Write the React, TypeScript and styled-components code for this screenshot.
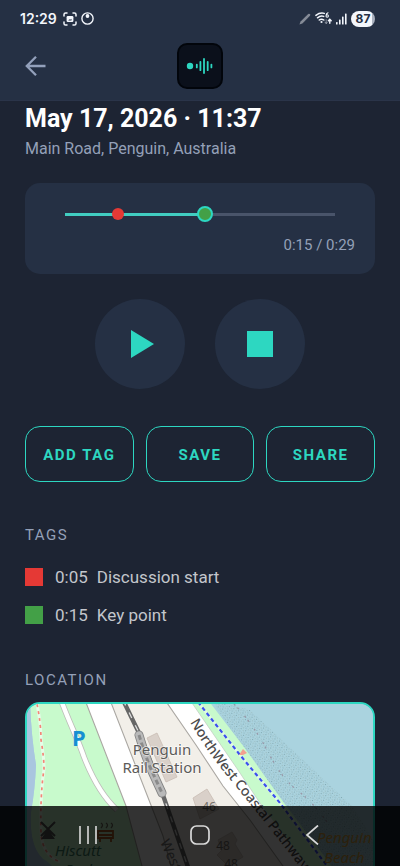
import React, { useState } from "react";
import styled, { createGlobalStyle } from "styled-components";

const c = {
  page: "#1d2433",
  panel: "#253044",
  teal: "#2dd7c1",
  muted: "#94a0b8",
  text: "#c3c6cc",
  rail: "#49546a",
};

const Global = createGlobalStyle`
  * { box-sizing: border-box; }
  html, body, #root { height: 100%; }
  body { margin: 0; background: ${c.page}; font-family: Roboto, sans-serif; }
  button { font: inherit; border: 0; padding: 0; background: none; cursor: pointer; }
`;

const Shell = styled.div`
  display: flex;
  flex-direction: column;
  height: 100vh;
  overflow: hidden;
`;

const TopArea = styled.header`
  flex: none;
  background: ${c.panel};
  border-bottom: 1px solid #2a3449;
`;

const StatusBar = styled.div`
  display: flex;
  align-items: center;
  justify-content: space-between;
  height: 37px;
  padding: 0 25px 0 20px;
  color: #f3f6fc;
`;

const StatusGroup = styled.div<{ $gap: number }>`
  display: flex;
  align-items: center;
  gap: ${(p) => p.$gap}px;
`;

const Clock = styled.time`
  margin-right: 2px;
  font: 600 14px/20px Inter, sans-serif;
`;

const Battery = styled.span`
  width: 24px;
  height: 16px;
  border-radius: 8px;
  background: linear-gradient(90deg, #f3f6fc 87%, #aab1bf 87%);
  color: ${c.panel};
  font: 700 12px/16px Inter, sans-serif;
  text-align: center;
`;

const AppBar = styled.div`
  display: grid;
  grid-template-columns: 1fr auto 1fr;
  align-items: center;
  height: 63px;
  padding: 0 24px 6px;
`;

const BackButton = styled.button`
  display: flex;
  width: 24px;
  height: 24px;
`;

const Logo = styled.div`
  display: flex;
  width: 46px;
  height: 46px;
  border: 2px solid #02050b;
  border-radius: 10px;
  background: #0b101b;
`;

const Content = styled.main`
  flex: 1;
  min-height: 0;
  padding: 2px 25px 0;
  overflow-y: auto;
  scrollbar-width: none;
`;

const Title = styled.h1`
  margin: 0;
  color: #fff;
  font-size: 25px;
  font-weight: 700;
  line-height: 32px;
`;

const Place = styled.p`
  margin: 2px 0 22px;
  color: ${c.muted};
  font-size: 16px;
  line-height: 24px;
`;

const PlayerCard = styled.section`
  display: flex;
  flex-direction: column;
  gap: 11px;
  padding: 20px;
  border-radius: 15px;
  background: ${c.panel};
`;

const Timeline = styled.div`
  position: relative;
  display: flex;
  align-items: center;
  height: 22px;
  margin: 0 20px;
`;

const Rail = styled.div`
  width: 100%;
  height: 3px;
  background: ${c.rail};
`;

const Played = styled.div`
  height: 3px;
  background: #41cdc1;
`;

const Seek = styled.input`
  position: absolute;
  left: -8px;
  width: calc(100% + 16px);
  height: 16px;
  margin: 0;
  appearance: none;
  background: transparent;
  &::-webkit-slider-thumb {
    appearance: none;
    width: 16px;
    height: 16px;
    border: 2px solid ${c.teal};
    border-radius: 50%;
    background: #43a047;
  }
`;

const Marker = styled.span`
  position: absolute;
  width: 12px;
  height: 12px;
  border-radius: 50%;
  background: #e53935;
  transform: translateX(-50%);
`;

const Elapsed = styled.div`
  color: ${c.muted};
  font-size: 15px;
  line-height: 18px;
  text-align: right;
`;

const Transport = styled.div`
  display: flex;
  justify-content: center;
  gap: 30px;
  margin: 25px 0 37px;
`;

const RoundButton = styled.button`
  display: grid;
  place-items: center;
  width: 90px;
  height: 90px;
  border-radius: 50%;
  && { background: ${c.panel}; }
`;

const Actions = styled.div`
  display: grid;
  grid-template-columns: repeat(3, 1fr);
  gap: 12px;
`;

const ActionButton = styled.button`
  && {
    height: 56px;
    padding-top: 2px;
    border: 1px solid ${c.teal};
    border-radius: 15px;
    color: ${c.teal};
    font-size: 15px;
    font-weight: 700;
    letter-spacing: 1.5px;
  }
`;

const SectionLabel = styled.h2<{ $after: number }>`
  margin: 43px 0 ${(p) => p.$after}px;
  color: ${c.muted};
  font-size: 15px;
  font-weight: 400;
  line-height: 20px;
  letter-spacing: 1.5px;
`;

const TagList = styled.ul`
  display: grid;
  gap: 14px;
  margin: 0;
  padding: 0;
  list-style: none;
`;

const Tag = styled.li`
  display: flex;
  align-items: center;
  color: ${c.text};
  font-size: 17px;
  line-height: 24px;
`;

const Swatch = styled.span<{ $color: string }>`
  width: 18px;
  height: 18px;
  margin-right: 12px;
  background: ${(p) => p.$color};
`;

const TagTime = styled.time`
  margin-right: 9px;
`;

const MapFrame = styled.div`
  height: 240px;
  border: 2px solid ${c.teal};
  border-radius: 15px;
  overflow: hidden;
  background: #aad3df;
  svg { display: block; width: 100%; height: 100%; }
`;

const SystemNav = styled.nav`
  position: fixed;
  inset: auto 0 0;
  display: grid;
  grid-template-columns: 88px 1fr 88px;
  height: 60px;
  padding: 0 44px 2px;
  background: rgba(0, 0, 0, 0.8);
`;

const NavButton = styled.button`
  display: grid;
  place-items: center;
`;

const MapDrawing = () => (
  <svg viewBox="27 704 346 236" preserveAspectRatio="xMidYMin slice" fontFamily="Noto Sans, sans-serif">
    <defs>
      <pattern id="sand" width="5" height="5" patternUnits="userSpaceOnUse" patternTransform="rotate(25)">
        <circle cx="1" cy="1" r=".5" fill="#6f969f" />
        <circle cx="3.4" cy="1.8" r=".5" fill="#8fa9a8" />
        <circle cx="1.6" cy="3.6" r=".5" fill="#6f969f" />
        <circle cx="4.2" cy="4.2" r=".5" fill="#8fa9a8" />
      </pattern>
      <path id="pathway" d="M190 722 C205 748 220 768 237 788 C259 815 281 842 310 880" />
    </defs>
    <rect x="20" y="700" width="360" height="250" fill="#aad3df" />
    <path d="M212 700 L250 710 L352 806 L374 840 V900 H340Z" fill="url(#sand)" />
    <path d="M234 704 Q254 725 268 752 T297 790 T330 826" fill="none" stroke="#9798a8" strokeWidth="1.3" strokeDasharray="2 3 2 9" />
    <path d="M30 700 Q31 735 36 765 Q35 790 31 812 Q29 845 42 858 Q65 870 100 950 H390 L325 857 L284 803 L244 747 L208 700Z" fill="#c8facc" />
    <path d="M26 700 H30 Q31 735 36 765 Q35 790 31 812 Q29 845 42 858 L80 950 H20Z" fill="#a9c6df" />
    <path d="M85 700 L126 806 L142 866 L160 950 H345 L318 880 L262 806 L238 770 L190 700Z" fill="#fff" />
    <path d="M110 700 L163 836 L193 950 H330 L283 866 L250 820 L223 786 L196 745 L165 700Z" fill="#f2efe9" />
    <path d="M110 700 L163 836 L193 950 M330 950 L283 866 L250 820 L223 786 L196 745 L165 700 M85 700 L126 806 L142 866 L160 950" fill="none" stroke="#aaa7a2" strokeWidth="1.1" />
    <path d="M262 806 L238 770 L190 700" fill="none" stroke="#c3cec3" strokeWidth=".8" />
    <path d="M61 700 C71 727 78 739 84 757 C93 780 103 797 117 810" fill="none" stroke="#bdbdb9" strokeWidth="6" />
    <path d="M61 700 C71 727 78 739 84 757 C93 780 103 797 117 810" fill="none" stroke="#fff" strokeWidth="4.4" />
    <path d="M37 704 Q41 724 41 740 Q44 757 44 769 Q40 796 41 832 Q42 855 60 862" fill="none" stroke="#fff" strokeWidth="3" opacity=".55" />
    <path d="M37 704 Q41 724 41 740 Q44 757 44 769 Q40 796 41 832 Q42 855 60 862" fill="none" stroke="#f48678" strokeWidth="1.7" strokeDasharray="3 4" />
    <path d="M147 738 L157 733 L177 777 L166 782Z" fill="#d9d0c9" stroke="#c9bdb4" strokeWidth=".8" />
    <path d="M193 798 L207 789 L219 809 L200 819Z M218 840 L232 832 L237 840 L235 844 L243 857 L228 866 L217 855 L222 850Z" fill="#d9d0c9" stroke="#c9bdb4" strokeWidth=".8" />
    <path d="M123 700 L141 737 L164 798 L189 870 L214 950" fill="none" stroke="#666" strokeWidth="4.4" />
    <path d="M123 700 L141 737 L164 798 L189 870 L214 950" fill="none" stroke="#ddd" strokeWidth="1.3" strokeDasharray="6 8" />
    <path d="M139 735 L144 751 L150 767 L162 793" fill="none" stroke="#818181" strokeWidth="9" strokeLinejoin="round" strokeLinecap="round" />
    <path d="M139 735 L144 751 L150 767 L162 793" fill="none" stroke="#b9b9b9" strokeWidth="7.4" strokeLinejoin="round" strokeLinecap="round" />
    <path d="M139 735 L144 751 L150 767 L162 793" fill="none" stroke="#8a8a8a" strokeWidth="3" strokeDasharray="5 3" />
    <path d="M198 702 L240 755 L280 803 L330 870" fill="none" stroke="#fff" strokeWidth="3" opacity=".4" />
    <path d="M198 702 L240 755 L280 803 L330 870" fill="none" stroke="#3c50ee" strokeWidth="2.2" strokeDasharray="4 3" />
    <path d="M239 755 L243 749 L247 753 L243 755Z" fill="#f3a08e" />
    <g fill="#5c5b59" stroke="#fff" strokeWidth="1.5" strokeOpacity=".65" paintOrder="stroke" fontSize="15" textAnchor="middle">
      <text x="162" y="755">Penguin</text>
      <text x="162" y="773">Rail Station</text>
    </g>
    <text fontSize="14" fontWeight="500" fill="#4b4b4b"><textPath href="#pathway">NorthWest Coastal Pathway</textPath></text>
    <g fill="#75706b" fontSize="12" textAnchor="middle">
      <text x="209" y="811">46</text>
      <text x="223" y="850">48</text>
      <text x="231" y="868">48</text>
    </g>
    <text fontSize="14" fill="#777" transform="translate(160 842) rotate(66)">West</text>
    <text x="72" y="746" fontSize="22" fontWeight="700" fill="#168fd2">P</text>
    <g fontSize="15" fontStyle="italic" fill="#3f8066">
      <text x="55" y="856">Hiscutt</text>
      <text x="65" y="875">Park</text>
    </g>
    <g fontSize="15" fontStyle="italic" fill="#d9a23c">
      <text x="317" y="843">Penguin</text>
      <text x="324" y="863">Beach</text>
    </g>
    <path d="M41 822 L55 836 M55 822 L41 836 M43 838 L48 831 L53 838Z" fill="#555" stroke="#555" strokeWidth="2" />
    <path d="M98 831 H113 V838 H98Z M98 835 H113 M100 838 V842 M111 838 V842" fill="none" stroke="#a85925" strokeWidth="1.8" />
    <path d="M101 823 q3 2 0 5 M106 823 q3 2 0 5 M111 823 q3 2 0 5" fill="none" stroke="#6d6a5d" strokeWidth="1.3" />
  </svg>
);

const CaptureIcon = () => (
  <svg width="14" height="14" viewBox="0 0 14 14" fill="none" stroke="currentColor" strokeWidth="1.5" strokeLinecap="round" aria-hidden="true">
    <path d="M1 4V2.6Q1 1 2.6 1H4M10 1h1.4Q13 1 13 2.6V4M13 10v1.4Q13 13 11.4 13H10M4 13H2.6Q1 13 1 11.4V10" />
    <rect x="3.6" y="4" width="6.8" height="6" rx="1.2" fill="currentColor" stroke="none" />
    <path d="M5.2 8.5L6.4 7.2L7.1 7.8L8.5 6.7V8.5Z" fill={c.panel} stroke="none" />
  </svg>
);

const DialIcon = () => (
  <svg width="13" height="13" viewBox="0 0 13 13" fill="none" aria-hidden="true">
    <circle cx="6.5" cy="6.5" r="5.6" stroke="currentColor" strokeWidth="1.4" />
    <circle cx="6.5" cy="4" r="1.9" fill="currentColor" />
  </svg>
);

const PenIcon = () => (
  <svg width="12" height="12" viewBox="0 0 12 12" aria-hidden="true">
    <path d="M.4 11.5L1.6 8.5L9.2 1Q10 .3 10.9 1.1T11 2.8L3.4 10.4Z" fill="#858b97" />
  </svg>
);

const WifiIcon = () => (
  <svg width="17" height="13" viewBox="0 0 17 13" fill="none" stroke="currentColor" strokeLinecap="round" aria-hidden="true">
    <path d="M.9 3.4Q5 .2 9.3 1.4M2.5 5.8Q5.4 3.4 8.7 4.4M4.3 8Q6.5 6.4 8.8 8" strokeWidth="1.5" />
    <circle cx="6.5" cy="10" r="1.1" fill="currentColor" stroke="none" />
    <path d="M13 .8Q11 1.5 11 4M11 4a1.2 1.2 0 1 0 2.4 0a1.2 1.2 0 1 0-2.4 0" strokeWidth="1.1" />
    <path d="M14.8 11.3V7.6M13.4 8.8L14.8 7.2L16.2 8.8" strokeWidth="1.4" />
    <path d="M11.2 7.6V11.3M10 10.2L11.2 11.6L12.4 10.2" strokeWidth="1" opacity=".45" />
  </svg>
);

const SignalIcon = () => (
  <svg width="11" height="12" viewBox="0 0 11 12" fill="currentColor" aria-hidden="true">
    <rect x="0" y="9" width="1.6" height="2.5" rx=".6" />
    <rect x="3" y="6.5" width="1.6" height="5" rx=".6" />
    <rect x="6" y="3.5" width="1.6" height="8" rx=".6" />
    <rect x="9" y=".5" width="1.6" height="11" rx=".6" />
  </svg>
);

const tags = [
  { time: "0:05", label: "Discussion start", color: "#e53935" },
  { time: "0:15", label: "Key point", color: "#43a047" },
];

export default function App() {
  const [position, setPosition] = useState(52);
  return (
    <>
      <Global />
      <Shell>
        <TopArea>
          <StatusBar>
            <StatusGroup $gap={4}>
              <Clock>12:29</Clock>
              <CaptureIcon />
              <DialIcon />
            </StatusGroup>
            <StatusGroup $gap={4}>
              <PenIcon />
              <WifiIcon />
              <SignalIcon />
              <Battery>87</Battery>
            </StatusGroup>
          </StatusBar>
          <AppBar>
            <BackButton aria-label="Back">
              <svg width="24" height="24" viewBox="0 0 24 24" fill="none" stroke="#93a0bb" strokeWidth="2.3">
                <path d="M21.5 12H3M12 2.8L2.8 12L12 21.2" />
              </svg>
            </BackButton>
            <Logo>
              <svg width="42" height="42" viewBox="0 0 42 42" stroke={c.teal} strokeWidth="1.8" strokeLinecap="round" aria-hidden="true">
                <circle cx="11" cy="21" r="3.2" fill={c.teal} stroke="none" />
                <path d="M17.8 19.6V22.4M21.4 16.8V25.2M25 14V28M28.7 16.8V25.2M32.4 19.6V22.4" />
              </svg>
            </Logo>
          </AppBar>
        </TopArea>
        <Content>
          <Title>May 17, 2026 · 11:37</Title>
          <Place>Main Road, Penguin, Australia</Place>
          <PlayerCard>
            <Timeline>
              <Rail>
                <Played style={{ width: `${position}%` }} />
              </Rail>
              <Marker style={{ left: "19.5%" }} />
              <Seek
                type="range"
                aria-label="Playback position"
                value={position}
                onChange={(e) => setPosition(Number(e.target.value))}
              />
            </Timeline>
            <Elapsed>0:15 / 0:29</Elapsed>
          </PlayerCard>
          <Transport>
            <RoundButton aria-label="Play">
              <svg width="30" height="30" viewBox="0 0 30 30"><path d="M6 1L29 15L6 29Z" fill={c.teal} /></svg>
            </RoundButton>
            <RoundButton aria-label="Stop">
              <svg width="26" height="26" viewBox="0 0 26 26"><path d="M0 0H26V26H0Z" fill={c.teal} /></svg>
            </RoundButton>
          </Transport>
          <Actions>
            <ActionButton>ADD TAG</ActionButton>
            <ActionButton>SAVE</ActionButton>
            <ActionButton>SHARE</ActionButton>
          </Actions>
          <SectionLabel $after={20}>TAGS</SectionLabel>
          <TagList>
            {tags.map((t) => (
              <Tag key={t.time}>
                <Swatch $color={t.color} />
                <TagTime>{t.time}</TagTime>
                {t.label}
              </Tag>
            ))}
          </TagList>
          <SectionLabel $after={12}>LOCATION</SectionLabel>
          <MapFrame>
            <MapDrawing />
          </MapFrame>
        </Content>
        <SystemNav aria-label="System">
          <NavButton aria-label="Recent apps">
            <svg width="20" height="20" viewBox="0 0 20 20" stroke="#d9d9d9" strokeWidth="1.6"><path d="M2 1V19M10 1V19M18 1V19" /></svg>
          </NavButton>
          <NavButton aria-label="Home">
            <svg width="20" height="20" viewBox="0 0 20 20" fill="none" stroke="#d9d9d9" strokeWidth="1.7"><rect x="1" y="1" width="18" height="18" rx="5.5" /></svg>
          </NavButton>
          <NavButton aria-label="Go back">
            <svg width="20" height="20" viewBox="0 0 20 20" fill="none" stroke="#d9d9d9" strokeWidth="1.7"><path d="M16 .5L5 10L16 19.5" /></svg>
          </NavButton>
        </SystemNav>
      </Shell>
    </>
  );
}
